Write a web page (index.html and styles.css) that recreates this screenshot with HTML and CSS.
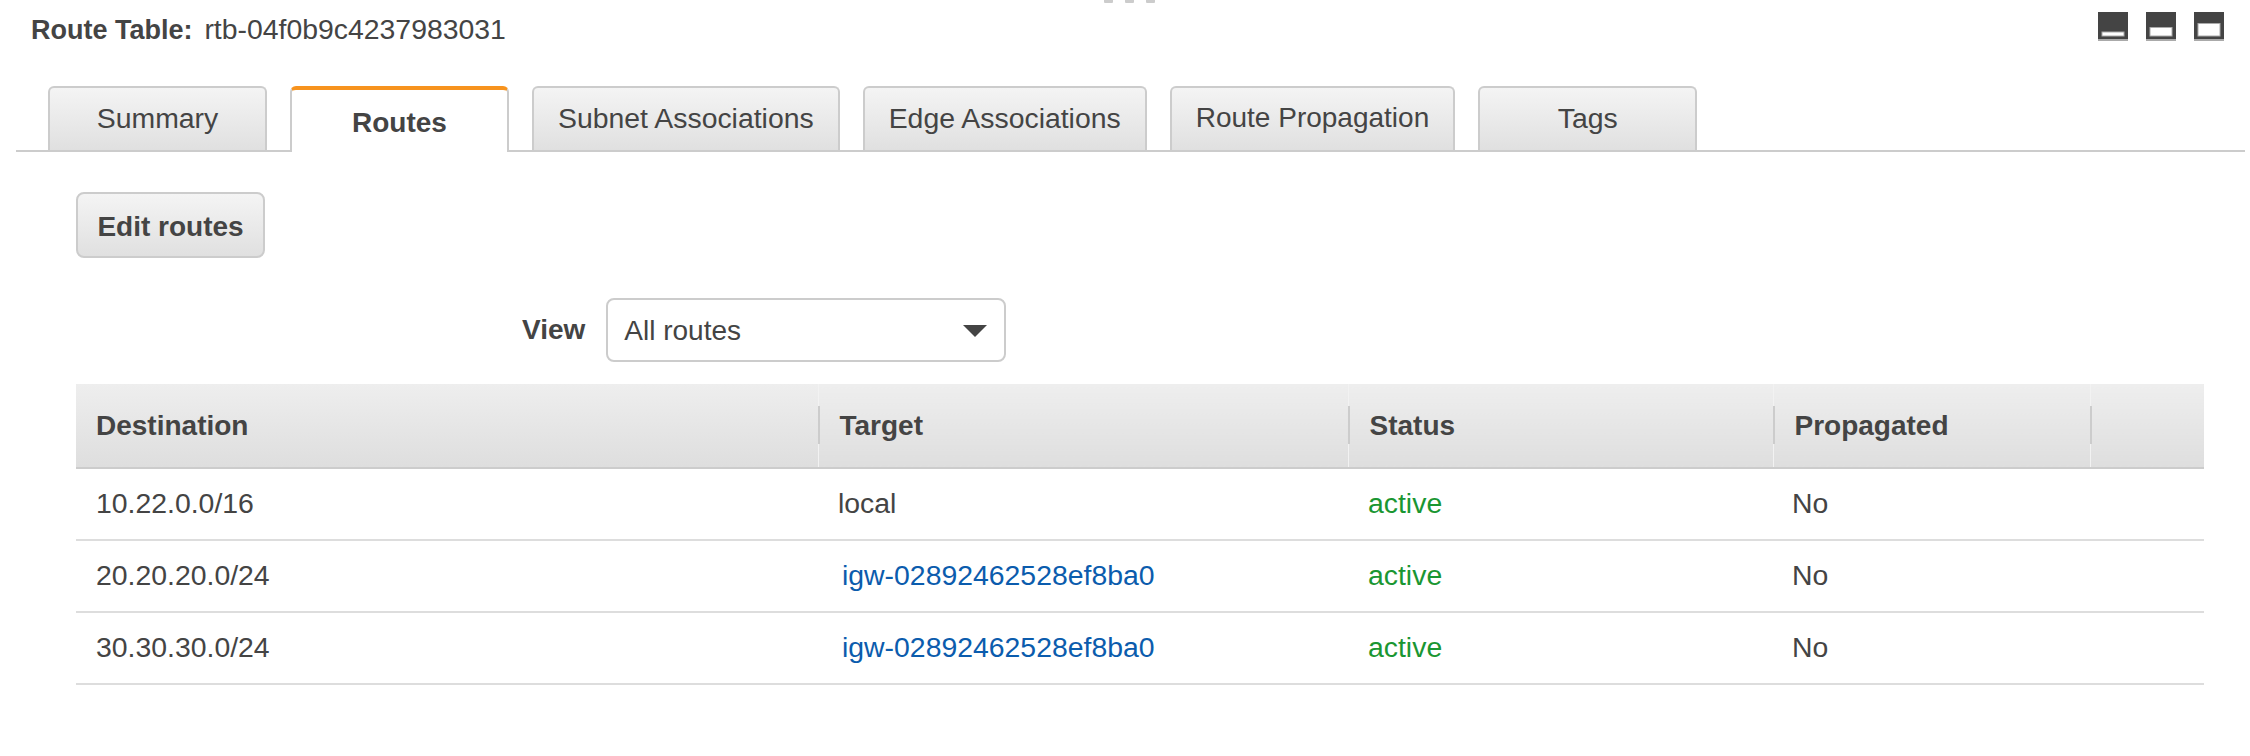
FILE: index.html
```html
<!DOCTYPE html>
<html lang="en">
<head>
<meta charset="utf-8">
<title>Route Table</title>
<link rel="stylesheet" href="styles.css">
</head>
<body>
<div class="handle"><i></i><i></i><i></i></div>
<header class="top">
  <div class="title"><b>Route Table:</b> rtb-04f0b9c4237983031</div>
  <div class="layouts">
    <svg class="layout" width="30" height="29" viewBox="0 0 30 29"><rect width="30" height="27" fill="#444"/><rect y="27" width="30" height="2" fill="#aaa"/><rect x="4" y="20" width="22" height="4" fill="#fff" stroke="#aaa" stroke-width="1"/></svg>
    <svg class="layout" width="30" height="29" viewBox="0 0 30 29"><rect width="30" height="27" fill="#444"/><rect y="27" width="30" height="2" fill="#aaa"/><rect x="4" y="15.500" width="22" height="8.500" fill="#fff" stroke="#aaa" stroke-width="1"/></svg>
    <svg class="layout" width="30" height="29" viewBox="0 0 30 29"><rect width="30" height="27" fill="#444"/><rect y="27" width="30" height="2" fill="#aaa"/><rect x="4" y="11.500" width="22" height="12.500" fill="#fff" stroke="#aaa" stroke-width="1"/></svg>
  </div>
</header>
<nav class="tabs">
  <div class="tab">Summary</div>
  <div class="tab tab-active">Routes</div>
  <div class="tab">Subnet Associations</div>
  <div class="tab">Edge Associations</div>
  <div class="tab tab-tight">Route Propagation</div>
  <div class="tab">Tags</div>
</nav>
<main class="content">
  <button class="edit" type="button">Edit routes</button>
  <div class="filter">
    <span class="filter-label">View</span>
    <div class="select"><span>All routes</span><span class="caret"></span></div>
  </div>
  <table class="routes">
    <colgroup><col class="c1"><col class="c2"><col class="c3"><col class="c4"><col class="c5"></colgroup>
    <thead>
      <tr><th>Destination</th><th>Target</th><th>Status</th><th>Propagated</th><th></th></tr>
    </thead>
    <tbody>
      <tr><td>10.22.0.0/16</td><td class="plain">local</td><td class="active">active</td><td>No</td><td></td></tr>
      <tr><td>20.20.20.0/24</td><td><a class="link">igw-02892462528ef8ba0</a></td><td class="active">active</td><td>No</td><td></td></tr>
      <tr><td>30.30.30.0/24</td><td><a class="link">igw-02892462528ef8ba0</a></td><td class="active">active</td><td>No</td><td></td></tr>
    </tbody>
  </table>
</main>
</body>
</html>
```

FILE: styles.css
```css
* { box-sizing: border-box; }
html, body { margin: 0; padding: 0; background: #fff; }
body {
  position: relative;
  height: 756px;
  overflow: hidden;
  font-family: "Liberation Sans", Arial, sans-serif;
  font-size: 28.4px;
  color: #444;
}
.handle {
  position: absolute;
  top: -2px;
  left: 1104px;
  display: flex;
  gap: 12px;
}
.handle i { display: block; width: 9px; height: 5px; background: #ccc; border-radius: 1px; }
.top {
  display: flex;
  justify-content: space-between;
  height: 86px;
  padding: 12px 26px 0 31px;
}
.title { line-height: 34px; }
.title b { font-size: 27px; margin-right: 4px; }
.layouts { display: flex; gap: 18px; align-items: flex-start; }
.layout { display: block; }
.tabs {
  display: flex;
  gap: 23px;
  height: 66px;
  margin: 0 5px 0 16px;
  padding-left: 32px;
  border-bottom: 2px solid #ccc;
}
.tab {
  min-width: 219px;
  height: 64px;
  padding: 12px 24px 0;
  line-height: 36px;
  text-align: center;
  white-space: nowrap;
  border: 2px solid #ccc;
  border-bottom: 0;
  border-radius: 6px 6px 0 0;
  background: linear-gradient(#f4f4f4, #e0e0e0);
}
.tab-tight { font-size: 28px; }
.tab-active {
  height: 66px;
  padding-top: 15px;
  font-size: 28px;
  font-weight: bold;
  background: #fff;
  border-top: 4px solid #f7931e;
}
.content { padding: 40px 46px 0 76px; }
.edit {
  display: block;
  width: 189px;
  height: 66px;
  padding: 4px 0 0;
  font: bold 28px "Liberation Sans", Arial, sans-serif;
  color: #444;
  border: 2px solid #ccc;
  border-radius: 8px;
  background: linear-gradient(#f4f4f4, #e0e0e0);
}
.filter {
  display: flex;
  align-items: center;
  gap: 21px;
  margin: 40px 0 22px 446px;
}
.filter-label { font-size: 28px; font-weight: bold; }
.select {
  display: flex;
  justify-content: space-between;
  align-items: center;
  width: 400px;
  height: 64px;
  padding: 1px 17px 0 16px;
  font-size: 28px;
  border: 2px solid #ccc;
  border-radius: 8px;
}
.caret {
  width: 0;
  height: 0;
  border-left: 12px solid transparent;
  border-right: 12px solid transparent;
  border-top: 12px solid #444;
}
.routes {
  width: 2128px;
  table-layout: fixed;
  border-collapse: collapse;
}
.c1 { width: 742px; }
.c2 { width: 530px; }
.c3 { width: 425px; }
.c4 { width: 317px; }
.c5 { width: 114px; }
.routes th {
  position: relative;
  height: 84px;
  padding: 1px 0 0 21px;
  text-align: left;
  font-size: 28px;
  font-weight: bold;
  background: linear-gradient(#eee, #dedede);
  border-bottom: 2px solid #ccc;
}
.routes th:first-child { padding-left: 20px; }
.routes th + th { border-left: 1px solid #f2f2f2; }
.routes th + th::before {
  content: "";
  position: absolute;
  left: -1px;
  top: 22px;
  width: 2px;
  height: 38px;
  background: #ccc;
}
.routes td {
  height: 72px;
  padding: 0 0 2px 20px;
  border-bottom: 2px solid #ddd;
  white-space: nowrap;
}
.active { color: #1a9632; }
.link { color: #0b5cad; padding-left: 4px; }
.routes td:nth-child(4) { padding-left: 19px; }
```
